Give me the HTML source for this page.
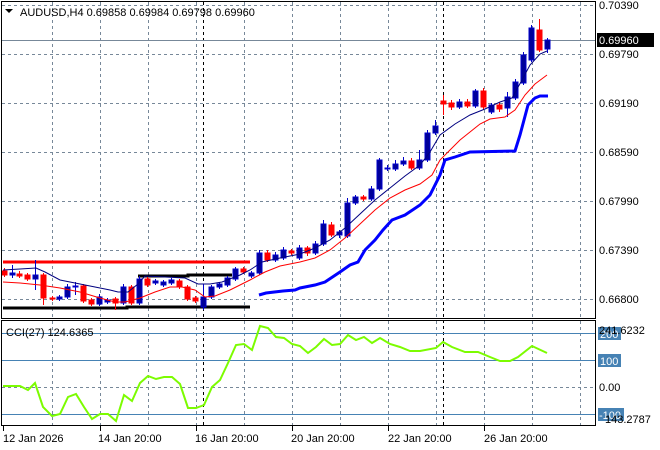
<!DOCTYPE html>
<html><head><meta charset="utf-8"><style>
html,body{margin:0;padding:0;background:#fff;width:660px;height:450px;overflow:hidden}
svg{display:block;font-family:"Liberation Sans",sans-serif;font-size:11px}
</style></head><body>
<svg width="660" height="450" viewBox="0 0 660 450" xmlns="http://www.w3.org/2000/svg">
<rect width="660" height="450" fill="#fff"/>
<!-- grid main -->
<g stroke="#778899" stroke-width="1" stroke-dasharray="3,3">
<path d="M2 5.5H595M2 54.5H595M2 103.5H595M2 152.5H595M2 201.5H595M2 250.5H595M2 299.5H595"/>
<path d="M52.5 2V318M100.5 2V318M148.5 2V318M196.5 2V318M244.5 2V318M292.5 2V318M340.5 2V318M388.5 2V318M436.5 2V318M484.5 2V318M532.5 2V318M580.5 2V318"/>
<path d="M52.5 321V426M100.5 321V426M148.5 321V426M196.5 321V426M244.5 321V426M292.5 321V426M340.5 321V426M388.5 321V426M436.5 321V426M484.5 321V426M532.5 321V426M580.5 321V426M2 387.5H595"/>
</g>
<g stroke="#000" stroke-dasharray="3,3"><path d="M203.5 2V426M443.5 2V426"/></g>
<path d="M2 40.5H595" stroke="#778899"/>
<!-- horizontal thick lines -->
<path d="M3 262H250" stroke="#ff0000" stroke-width="3"/>
<path d="M3 308H127V307H250" stroke="#000" stroke-width="3" fill="none"/>
<path d="M138 276H188V275H232" stroke="#000" stroke-width="3" fill="none"/>
<!-- candles -->
<g stroke-width="1">
<g stroke="#0000cc" fill="#000099">
<path d="M12.5 265V278M35.5 260V290M59.5 295V301M67.5 284V299M75.5 282V295M99.5 294V306M107.5 298V304M123.5 284V305M139.5 276V305M155.5 279V285M163.5 280V287M171.5 278V285M203.5 284V310M211.5 285V299M219.5 282V289M227.5 276V287M235.5 267V281M251.5 271V278M259.5 250V275M275.5 252V262M283.5 247V260M299.5 245V260M315.5 241V255M323.5 220V246M339.5 230V238M347.5 198V238M355.5 195V205M371.5 186V201M379.5 158V191M387.5 165V171M395.5 160V171M403.5 157V166M419.5 150V170M427.5 130V162M435.5 120V135M459.5 99V109M475.5 89V108M491.5 103V114M507.5 92V117M515.5 79V100M523.5 52V85M531.5 25V62M547.5 38V53"/>
</g>
<g stroke="#ff0000"><path d="M4.5 268V277M19.5 271V278M27.5 273V281M43.5 273V305M52.5 296V301M83.5 284V303M91.5 298V306M115.5 297V310M131.5 285V305M147.5 277V287M179.5 279V289M187.5 285V301M195.5 296V303M243.5 267V274M267.5 250V262M291.5 249V255M307.5 246V256M331.5 222V237M363.5 195V201M411.5 158V170M443.5 95V115M451.5 100V110M467.5 99V108M483.5 88V110M499.5 102V112M539.5 19V52"/></g>
<g fill="#000099" stroke="#0000cc">
<rect x="10" y="273" width="5" height="2"/><rect x="33" y="275" width="5" height="4"/><rect x="57" y="297" width="5" height="2"/><rect x="65" y="287" width="5" height="10"/><rect x="73" y="286" width="5" height="1"/><rect x="97" y="297" width="5" height="7"/><rect x="105" y="300" width="5" height="2"/><rect x="121" y="287" width="5" height="16"/><rect x="137" y="279" width="5" height="24"/><rect x="153" y="281" width="5" height="2"/><rect x="161" y="282" width="5" height="3"/><rect x="169" y="280" width="5" height="3"/><rect x="201" y="297" width="5" height="10"/><rect x="209" y="287" width="5" height="10"/><rect x="217" y="284" width="5" height="3"/><rect x="225" y="278" width="5" height="7"/><rect x="233" y="269" width="5" height="10"/><rect x="249" y="273" width="5" height="3"/><rect x="257" y="253" width="5" height="20"/><rect x="273" y="255" width="5" height="5"/><rect x="281" y="250" width="5" height="8"/><rect x="297" y="248" width="5" height="10"/><rect x="313" y="244" width="5" height="9"/><rect x="321" y="224" width="5" height="20"/><rect x="337" y="232" width="5" height="3"/><rect x="345" y="203" width="5" height="33"/><rect x="353" y="197" width="5" height="6"/><rect x="369" y="189" width="5" height="10"/><rect x="377" y="160" width="5" height="29"/><rect x="385" y="168" width="5" height="1"/><rect x="393" y="164" width="5" height="5"/><rect x="401" y="161" width="5" height="3"/><rect x="417" y="160" width="5" height="8"/><rect x="425" y="133" width="5" height="27"/><rect x="433" y="126" width="5" height="7"/><rect x="457" y="102" width="5" height="5"/><rect x="473" y="91" width="5" height="15"/><rect x="489" y="105" width="5" height="7"/><rect x="505" y="97" width="5" height="11"/><rect x="513" y="82" width="5" height="16"/><rect x="521" y="55" width="5" height="28"/><rect x="529" y="28" width="5" height="32"/><rect x="545" y="40" width="5" height="9"/>
</g>
<g fill="#ff0000" stroke="#ff0000">
<rect x="2" y="271" width="5" height="4"/><rect x="17" y="274" width="5" height="2"/><rect x="25" y="275" width="5" height="4"/><rect x="41" y="275" width="5" height="23"/><rect x="50" y="298" width="5" height="1"/><rect x="81" y="286" width="5" height="15"/><rect x="89" y="300" width="5" height="4"/><rect x="113" y="299" width="5" height="4"/><rect x="129" y="287" width="5" height="16"/><rect x="145" y="279" width="5" height="6"/><rect x="177" y="281" width="5" height="6"/><rect x="185" y="287" width="5" height="12"/><rect x="193" y="298" width="5" height="3"/><rect x="241" y="269" width="5" height="3"/><rect x="265" y="253" width="5" height="7"/><rect x="289" y="251" width="5" height="2"/><rect x="305" y="248" width="5" height="5"/><rect x="329" y="225" width="5" height="10"/><rect x="361" y="197" width="5" height="2"/><rect x="409" y="161" width="5" height="7"/><rect x="441" y="101" width="5" height="3"/><rect x="449" y="103" width="5" height="4"/><rect x="465" y="102" width="5" height="4"/><rect x="481" y="91" width="5" height="16"/><rect x="497" y="105" width="5" height="4"/><rect x="537" y="30" width="5" height="20"/>
</g>
</g>
<!-- MAs -->
<polyline fill="none" stroke="#000080" stroke-width="1" points="3,270 20,269 36,268 45,272 60,280 85,285 110,290 118,292 128,292 138,284 145,276 165,277 185,278 198,284 210,284 222,282 240,275 250,270 262,262 280,258 300,254 315,248 330,240 345,228 360,214 375,200 390,188 405,176 420,165 430,152 440,135 455,124 470,115 485,109 500,102 512,98 522,80 530,65 540,54 547,51"/>
<polyline fill="none" stroke="#ff0000" stroke-width="1" points="3,282 20,283 40,285 60,288 80,292 100,298 115,302 125,302 140,298 155,292 170,287 182,287 195,290 205,297 215,296 230,290 250,280 265,272 280,266 300,262 315,258 330,250 345,238 360,224 375,210 390,198 405,190 420,184 432,175 440,160 450,150 460,140 470,132 480,124 490,119 505,117 515,110 525,95 535,84 547,75"/>
<polyline fill="none" stroke="#0000ff" stroke-width="3" points="259,295 266,293 283,291 295,290 300,288 315,285 325,282 340,272 350,265 358,262 365,250 375,240 383,230 392,220 405,215 420,205 430,195 440,175 445,160 455,157 470,152 515,151 520,135 528,105 535,98 540,96 548,96"/>
<!-- frames -->
<rect x="1.5" y="1.5" width="594" height="317" fill="none" stroke="#000"/>
<rect x="1.5" y="320.5" width="594" height="105" fill="none" stroke="#000"/>
<!-- CCI levels -->
<path d="M2 333.5H595M2 360.5H595M2 414.5H595" stroke="#4682b4"/>
<polyline fill="none" stroke="#7cfc00" stroke-width="2" points="3,386 20,386 28,390 35,383 43,407 52,416 60,414 68,397 76,394 84,407 92,419 100,414 108,414 116,421 124,395 132,401 140,383 148,376 156,379 164,377 172,377 180,384 188,408 196,408 204,405 212,387 220,380 228,363 236,345 244,344 252,350 260,326 268,328 276,337 284,338 292,344 300,346 308,353 316,347 324,339 332,345 340,344 348,335 356,340 364,337 372,343 380,338 390,344 400,347 410,351 420,351 436,348 443,342 452,347 465,352 478,352 490,357 500,361 510,361 518,357 532,346 547,353"/>
<!-- texts -->
<path d="M5 9h8l-4 4z" fill="#000"/>
<text x="20" y="16" fill="#000">AUDUSD,H4  0.69858 0.69984 0.69798 0.69960</text>
<text x="6" y="336" fill="#000">CCI(27) 124.6365</text>
<g fill="#000">
<text x="599" y="9">0.70390</text>
<text x="599" y="58">0.69790</text>
<text x="599" y="107">0.69190</text>
<text x="599" y="156">0.68590</text>
<text x="599" y="205">0.67990</text>
<text x="599" y="254">0.67390</text>
<text x="599" y="303">0.66800</text>
</g>
<rect x="597" y="33" width="57" height="14" fill="#000"/>
<text x="599" y="44" fill="#fff">0.69960</text>
<rect x="598" y="327" width="23" height="13" fill="#4682b4"/>
<rect x="598" y="354" width="23" height="13" fill="#4682b4"/>
<rect x="598" y="408" width="26" height="13" fill="#4682b4"/>
<text x="600" y="338" fill="#fff">200</text>
<text x="600" y="365" fill="#fff">100</text>
<text x="599" y="419" fill="#fff">-100</text>
<text x="599" y="334" fill="#000">241.6232</text>
<text x="599" y="391" fill="#000">0.00</text>
<text x="605" y="423" fill="#000">143.2787</text>
<path d="M3.5 426V431M100.5 426V431M196.5 426V431M292.5 426V431M388.5 426V431M484.5 426V431" stroke="#000"/>
<g fill="#000">
<text x="3" y="442">12 Jan 2026</text>
<text x="98" y="442">14 Jan 20:00</text>
<text x="195" y="442">16 Jan 20:00</text>
<text x="291" y="442">20 Jan 20:00</text>
<text x="388" y="442">22 Jan 20:00</text>
<text x="484" y="442">26 Jan 20:00</text>
</g>
</svg>
</body></html>
